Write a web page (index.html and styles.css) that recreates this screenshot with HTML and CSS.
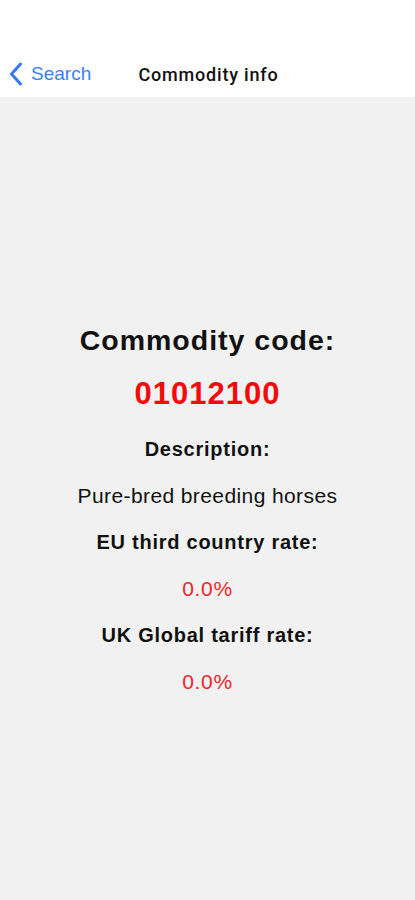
FILE: index.html
```html
<!DOCTYPE html>
<html lang="en">
<head>
    <meta charset="UTF-8">
    <meta name="viewport" content="width=device-width, initial-scale=1.0">
    <title>Commodity info</title>
    <link rel="stylesheet" href="styles.css">
</head>
<body>

    <header class="topbar">
        <nav class="navbar">
            <a class="back" href="#">
                <svg class="chevron" width="14" height="24" viewBox="0 0 14 24">
                    <path d="M11.5 2 L2.5 12 L11.5 22" fill="none" stroke="#3478f6" stroke-width="3" stroke-linecap="round" stroke-linejoin="round"/>
                </svg>
                <span>Search</span>
            </a>
            <div class="nav-title">Commodity info</div>
        </nav>
    </header>

    <main class="content">
        <h1 class="heading">Commodity code:</h1>
        <div class="code">01012100</div>

        <div class="label">Description:</div>
        <div class="value">Pure-bred breeding horses</div>

        <div class="label">EU third country rate:</div>
        <div class="rate">0.0%</div>

        <div class="label">UK Global tariff rate:</div>
        <div class="rate">0.0%</div>
    </main>

</body>
</html>
```

FILE: styles.css
```css
html, body {
    margin: 0;
    padding: 0;
    height: 100%;
}
body {
    font-family: "Liberation Sans", Arial, sans-serif;
    background-color: #f1f1f1;
    color: #111;
    display: flex;
    flex-direction: column;
}
.topbar {
    background-color: #ffffff;
    height: 97px;
    padding-top: 52px;
    box-sizing: border-box;
}
.navbar {
    position: relative;
    height: 44px;
    display: flex;
    align-items: center;
    justify-content: center;
}
.back {
    position: absolute; /* sits over the left side of the centred title */
    left: 9px;
    top: 0;
    height: 44px;
    display: flex;
    align-items: center;
    gap: 8px;
    color: #3a7ff6;
    text-decoration: none;
    font-size: 19px;
}
.chevron {
    display: block;
}
.nav-title {
    font-family: Roboto, "Liberation Sans", sans-serif;
    font-weight: 500;
    font-size: 18px;
    letter-spacing: 0.8px;
    color: #111;
    padding-left: 2px;
}
.content {
    flex: 1;
    display: flex;
    flex-direction: column;
    align-items: center;
    padding-top: 216px;
    text-align: center;
}
.heading {
    margin: 0;
    font-size: 28.5px;
    letter-spacing: 1px;
    font-weight: bold;
    line-height: 54px;
}
.code {
    font-size: 31px;
    letter-spacing: 1px;
    font-weight: bold;
    line-height: 54px;
    color: #f40a0a;
    margin-bottom: 5px;
}
.label {
    font-size: 20px;
    letter-spacing: 0.75px;
    font-weight: bold;
    line-height: 46.5px;
}
.value {
    font-size: 21px;
    letter-spacing: 0.4px;
    line-height: 46.5px;
}
.rate {
    font-size: 21px;
    letter-spacing: 0.7px;
    line-height: 46.5px;
    color: #f4242a;
}
```
